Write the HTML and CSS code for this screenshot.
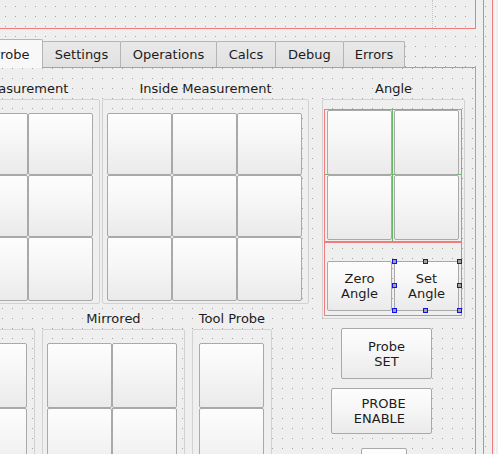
FILE: index.html
```html
<!DOCTYPE html>
<html>
<head>
<meta charset="utf-8">
<link rel="stylesheet" href="styles.css">
</head>
<body>
<div class="screen">
  <div class="main">
    <div class="topframe"><div class="topspacer"></div></div>
    <div class="tabwidget">
      <div class="tabbar">
        <div class="tab tab-sel t-probe">Probe</div>
        <div class="tab t-settings">Settings</div>
        <div class="tab t-operations">Operations</div>
        <div class="tab t-calcs">Calcs</div>
        <div class="tab t-debug">Debug</div>
        <div class="tab t-errors">Errors</div>
      </div>
      <div class="pane">
        <div class="left-block">
          <div class="row row1">
            <div class="col">
              <div class="gtitle">Outside Measurement</div>
              <div class="gbox box-a">
                <div class="bgrid g3x3">
                  <button class="pb"></button><button class="pb"></button><button class="pb"></button>
                  <button class="pb"></button><button class="pb"></button><button class="pb"></button>
                  <button class="pb"></button><button class="pb"></button><button class="pb"></button>
                </div>
              </div>
            </div>
            <div class="col">
              <div class="gtitle">Inside Measurement</div>
              <div class="gbox box-b">
                <div class="bgrid g3x3">
                  <button class="pb"></button><button class="pb"></button><button class="pb"></button>
                  <button class="pb"></button><button class="pb"></button><button class="pb"></button>
                  <button class="pb"></button><button class="pb"></button><button class="pb"></button>
                </div>
              </div>
            </div>
          </div>
          <div class="row row2">
            <div class="col">
              <div class="gtitle">&nbsp;</div>
              <div class="gbox box-d">
                <div class="bgrid g2x2">
                  <button class="pb"></button><button class="pb"></button>
                  <button class="pb"></button><button class="pb"></button>
                </div>
              </div>
            </div>
            <div class="col col-e">
              <div class="gtitle">Mirrored</div>
              <div class="gbox box-e">
                <div class="bgrid g2x2">
                  <button class="pb"></button><button class="pb"></button>
                  <button class="pb"></button><button class="pb"></button>
                </div>
              </div>
            </div>
            <div class="col col-f">
              <div class="gtitle">Tool Probe</div>
              <div class="gbox box-f">
                <div class="bgrid g1x2">
                  <button class="pb"></button>
                  <button class="pb"></button>
                </div>
              </div>
            </div>
          </div>
        </div>
        <div class="right-block">
          <div class="col">
            <div class="gtitle">Angle</div>
            <div class="gbox box-c">
              <div class="lay lay1">
                <button class="pb"></button><button class="pb"></button>
                <button class="pb"></button><button class="pb"></button>
                <span class="vline"></span>
              </div>
              <div class="lay lay2">
                <button class="pb">Zero<br>Angle</button>
                <button class="pb sel">Set<br>Angle
                  <span class="h h-tl"></span><span class="h h-tm"></span><span class="h h-tr"></span>
                  <span class="h h-ml"></span><span class="h h-mr"></span>
                  <span class="h h-bl"></span><span class="h h-bm"></span><span class="h h-br"></span>
                </button>
              </div>
            </div>
          </div>
          <button class="pb side b-set">Probe<br>SET</button>
          <button class="pb side b-enable">&nbsp;PROBE<br>ENABLE&nbsp;</button>
          <button class="pb side b-third"></button>
        </div>
      </div>
    </div>
  </div>
  <div class="strip">
    <div class="redcol"></div>
    <div class="edge"></div>
  </div>
</div>
</body>
</html>
```

FILE: styles.css
```css
html, body {
  margin: 0;
  padding: 0;
}

body {
  font-family: "DejaVu Sans", "Liberation Sans", sans-serif;
  font-size: 13px;
  color: #1c1c1c;
}

.screen {
  width: 498px;
  height: 454px;
  overflow: hidden;
  display: flex;
  background-color: #a3a3a3;
  background-image:
    linear-gradient(to right, #efefef 9px, transparent 9px),
    linear-gradient(to bottom, #efefef 9px, transparent 9px);
  background-size: 10px 10px;
  background-position: 6px 7px;
}

.main {
  width: 476px;
  flex-shrink: 0;
  display: flex;
  flex-direction: column;
}

.topframe {
  box-sizing: border-box;
  width: 476px;
  height: 29px;
  border-right: 1px solid #ef7b7b;
  border-bottom: 1px solid #ef7b7b;
  flex-shrink: 0;
}

.topspacer {
  box-sizing: border-box;
  width: 433px;
  height: 28px;
  border-right: 1px dotted #c6c6c6;
}

.tabwidget {
  margin-top: 10px;
  display: flex;
  flex-direction: column;
  flex: 1;
}

.tabbar {
  display: flex;
  align-items: flex-end;
  height: 28px;
  flex-shrink: 0;
}

.tab {
  box-sizing: border-box;
  flex-shrink: 0;
  height: 26px;
  padding-top: 5px;
  line-height: 15px;
  text-align: center;
  white-space: nowrap;
  border: 1px solid #b4b4b4;
  border-bottom: none;
  border-radius: 2px 2px 0 0;
  background: linear-gradient(to bottom, #e9e9e9, #e1e1e1);
  margin-left: -1px;
}

.tab-sel {
  position: relative;
  z-index: 1;
  height: 29px;
  padding-top: 7px;
  margin-bottom: -1px;
  background: #f8f8f8;
}

.t-probe { width: 64px; margin-left: -21px; }
.t-settings { width: 79px; }
.t-operations { width: 97px; }
.t-calcs { width: 60px; }
.t-debug { width: 69px; }
.t-errors { width: 62px; }

.pane {
  box-sizing: border-box;
  width: 476px;
  flex: 1;
  border-top: 1px solid #a4a4a4;
  border-right: 1px solid #a4a4a4;
  padding-top: 13px;
  display: flex;
  align-items: flex-start;
  background-color: #a3a3a3;
  background-image:
    linear-gradient(to right, #efefef 9px, transparent 9px),
    linear-gradient(to bottom, #efefef 9px, transparent 9px);
  background-size: 10px 10px;
  background-position: 3px 1px;
}

.left-block {
  margin-left: -107px;
  width: 416px;
  flex-shrink: 0;
  display: flex;
  flex-direction: column;
}

.row {
  display: flex;
  align-items: flex-start;
}

.row1 {
  gap: 2px;
}

.row2 {
  margin-top: 7px;
  gap: 7px;
}

.col {
  display: flex;
  flex-direction: column;
  flex-shrink: 0;
}

.gtitle {
  height: 15px;
  line-height: 15px;
  margin-bottom: 3px;
  text-align: center;
  white-space: nowrap;
}

.gbox {
  box-sizing: border-box;
  border: 1px solid #d2d2d2;
  border-radius: 2px;
  flex-shrink: 0;
}

.box-a, .box-b {
  width: 207px;
  padding: 13px 6px 2px 4px;
}

.box-d {
  width: 142px;
  padding: 13px 7px 0 3px;
}

.box-e {
  width: 143px;
  padding: 13px 7px 0 4px;
}

.box-f {
  width: 80px;
  padding: 13px 7px 0 6px;
}

.bgrid {
  display: grid;
}

.g3x3 {
  grid-template-columns: 65px 65px 65px;
  grid-template-rows: 62px 62px 64px;
}

.g2x2 {
  grid-template-columns: 65px 65px;
  grid-template-rows: 65px 65px;
}

.g1x2 {
  grid-template-columns: 65px;
  grid-template-rows: 65px 65px;
}

.pb {
  box-sizing: border-box;
  margin: 0;
  padding: 0;
  font: inherit;
  line-height: 15px;
  color: #1c1c1c;
  text-align: center;
  border: 1px solid #a9a9a9;
  border-radius: 2px;
  background: linear-gradient(to bottom, #fdfdfd 0%, #f6f6f6 45%, #eaeaea 100%);
  display: flex;
  align-items: center;
  justify-content: center;
}

.right-block {
  margin-left: 13px;
  display: flex;
  flex-direction: column;
  align-items: flex-start;
  flex-shrink: 0;
}

.box-c {
  width: 143px;
  padding: 9px 2px 2px 1px;
  display: flex;
  flex-direction: column;
}

.lay {
  box-sizing: border-box;
  width: 138px;
  border: 1px solid #ef7b7b;
  display: grid;
  grid-template-columns: 65px 65px;
  column-gap: 2px;
  position: relative;
  z-index: 0;
}

.lay1 {
  padding: 0 2px 1px 2px;
  grid-template-rows: 65px 65px;
}

.vline {
  position: absolute;
  left: 67px;
  top: -1px;
  bottom: -1px;
  width: 1px;
  background: #62bd62;
  z-index: 2;
}

.lay1::after {
  content: "";
  position: absolute;
  left: 0;
  right: 0;
  top: 64px;
  height: 1px;
  background: #62bd62;
  z-index: -1;
}

.lay2 {
  padding: 18px 2px 4px 2px;
  grid-template-rows: 50px;
}

.sel {
  position: relative;
}

.h {
  position: absolute;
  box-sizing: border-box;
  width: 5px;
  height: 5px;
  border: 1px solid #1010f0;
  background: #a2a2a2;
}

.h-tl { left: -3px; top: -3px; }
.h-tm { left: 28px; top: -3px; }
.h-tr { left: 62px; top: -3px; }
.h-ml { left: -3px; top: 21px; }
.h-mr { left: 62px; top: 21px; }
.h-bl { left: -3px; top: 46px; }
.h-bm { left: 28px; top: 46px; }
.h-br { left: 62px; top: 46px; }

.side {
  flex-shrink: 0;
}

.b-set {
  width: 91px;
  height: 51px;
  margin-top: 9px;
  margin-left: 19px;
}

.b-enable {
  width: 101px;
  height: 46px;
  margin-top: 9px;
  margin-left: 9px;
}

.b-third {
  width: 46px;
  height: 40px;
  margin-top: 14px;
  margin-left: 39px;
}

.strip {
  width: 22px;
  flex-shrink: 0;
  display: flex;
}

.redcol {
  box-sizing: border-box;
  margin-left: 7px;
  width: 10px;
  height: 454px;
  border-left: 1px solid #ef7b7b;
  border-right: 1px solid #ef7b7b;
}

.edge {
  margin-left: 2px;
  width: 1px;
  height: 454px;
  background: #f8f8f8;
}
```
